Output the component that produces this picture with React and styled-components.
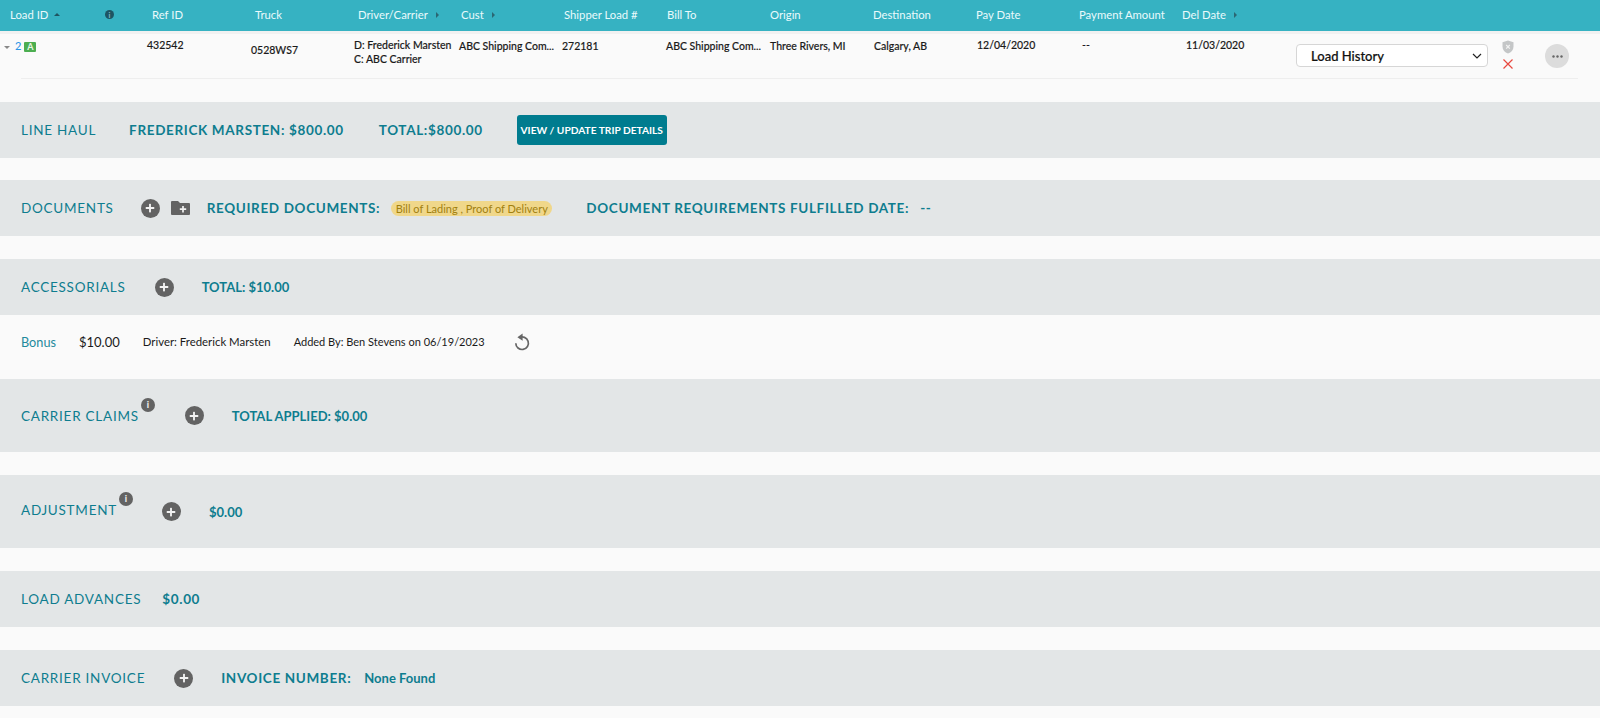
import React from "react";
import styled, { createGlobalStyle } from "styled-components";
import { FaPlus } from "react-icons/fa";

const GlobalStyle = createGlobalStyle`
  html, body {
    margin: 0;
    padding: 0;
    background: #fafafa;
    font-family: Lato, "Liberation Sans", sans-serif;
  }
`;

const Page = styled.div`
  width: 1600px;
  height: 718px;
  overflow: hidden;
  background: #fafafa;
`;

const HeaderBar = styled.div`
  display: grid;
  grid-template-columns: 95px 47px repeat(11, 103px);
  align-items: center;
  height: 31px;
  padding: 0 0 2px 10px;
  box-sizing: border-box;
  background: #36b2c2;
`;

const HeaderCell = styled.div`
  display: flex;
  align-items: center;
  gap: ${({ $gap }) => $gap || 6}px;
  font-size: 11.3px;
  color: #eafafc;
  white-space: nowrap;
`;

const Caret = styled.span`
  width: 0;
  height: 0;
  ${({ $up }) =>
    $up
      ? `border-left: 3px solid transparent;
         border-right: 3px solid transparent;
         border-bottom: 3px solid #1f5561;`
      : `border-top: 3.5px solid transparent;
         border-bottom: 3.5px solid transparent;
         border-left: 3.5px solid #2b6773;`}
`;

const HeaderInfo = styled.span`
  display: flex;
  align-items: center;
  justify-content: center;
  width: 9px;
  height: 9px;
  border-radius: 50%;
  background: #1d5563;
  color: #7fb6c0;
  font-size: 7px;
  font-weight: 900;
`;

const RowWrap = styled.div`
  height: 71px;
  box-sizing: border-box;
  border-top: 3px solid #f1f1f1;
`;

const Row = styled.div`
  display: grid;
  grid-template-columns: 143px 104px 103px 105px 103px 104px 104px 104px 103px 105px 104px 110px 1fr;
  height: 44px;
  padding-left: 4px;
`;

const Divider = styled.div`
  height: 1px;
  margin: 0 22px 0 21px;
  background: #eeeeee;
`;

const Cell = styled.div`
  padding-top: ${({ $top }) => $top ?? 5}px;
  font-size: 10.5px;
  line-height: 14px;
  font-weight: 500;
  color: #1a1a1a;
  white-space: nowrap;
  -webkit-text-stroke: 0.15px #1a1a1a;
`;

const IdCell = styled(Cell)`
  display: flex;
  align-items: flex-start;
  -webkit-text-stroke: 0;
`;

const Toggle = styled.span`
  width: 0;
  height: 0;
  margin: 7px 5px 0 0;
  border-left: 3px solid transparent;
  border-right: 3px solid transparent;
  border-top: 3px solid #888;
`;

const LoadLink = styled.span`
  margin-right: 3px;
  color: #2c96e6;
  font-size: 11px;
`;

const Badge = styled.span`
  display: flex;
  align-items: center;
  justify-content: center;
  width: 12px;
  height: 10px;
  margin-top: 3px;
  border-radius: 1px;
  background: #4cae50;
  color: #e9f6e9;
  font-size: 9px;
  font-weight: 700;
`;

const ActionCell = styled.div`
  display: flex;
  align-items: flex-start;
`;

const SelectBox = styled.div`
  display: flex;
  align-items: center;
  justify-content: space-between;
  flex: none;
  width: 192px;
  height: 23px;
  margin-top: 10px;
  padding: 0 5px 0 14px;
  box-sizing: border-box;
  background: #fff;
  border: 1px solid #d6d6d6;
  border-radius: 4px;
  font-size: 13px;
  font-weight: 500;
  color: #111;
  white-space: nowrap;
  -webkit-text-stroke: 0.2px #111;
`;

const StatusIcons = styled.div`
  display: flex;
  flex-direction: column;
  align-items: center;
  flex: none;
  gap: 5px;
  width: 12px;
  margin: 6px 0 0 14px;
`;

const MoreButton = styled.div`
  display: flex;
  align-items: center;
  justify-content: center;
  flex: none;
  width: 24px;
  height: 24px;
  margin: 10px 0 0 31px;
  border-radius: 50%;
  background: #dcdcdc;
`;

const Bar = styled.section`
  display: flex;
  align-items: center;
  height: ${({ $h }) => $h || 56}px;
  margin-bottom: ${({ $mb }) => $mb ?? 22}px;
  padding-left: 21px;
  box-sizing: border-box;
  background: #e3e6e7;
`;

const Title = styled.div`
  position: relative;
  margin-right: ${({ $mr }) => $mr}px;
  margin-bottom: ${({ $lift }) => $lift || 0}px;
  font-size: 13.5px;
  line-height: 16px;
  letter-spacing: 0.75px;
  color: #0e7d8f;
  white-space: nowrap;
`;

const Value = styled.div`
  margin-right: ${({ $mr }) => $mr || 0}px;
  font-size: 13.5px;
  font-weight: 700;
  letter-spacing: 0.65px;
  color: #0e7d8f;
  white-space: nowrap;
`;

const PlainValue = styled(Value)`
  font-size: 13px;
  letter-spacing: 0;
`;

const TripButton = styled.button`
  width: 150px;
  height: 30px;
  padding: 0;
  border: none;
  border-radius: 3px;
  background: #007c8f;
  color: #fff;
  font-family: inherit;
  font-size: 10.2px;
  font-weight: 700;
`;

const AddButton = styled.span`
  display: flex;
  align-items: center;
  justify-content: center;
  flex: none;
  width: 19px;
  height: 19px;
  margin-right: ${({ $mr }) => $mr}px;
  border-radius: 50%;
  background: #636363;
  color: #f2f2f2;
  font-size: 10px;
`;

const FolderIcon = styled.svg`
  flex: none;
  width: 19px;
  height: 16px;
  margin-right: 17px;
`;

const DocPill = styled.span`
  margin-right: 34px;
  padding: 0 4.5px;
  border-radius: 8px;
  background: #f0d78a;
  color: #a1800f;
  font-size: 11px;
  line-height: 15px;
  white-space: nowrap;
`;

const InfoDot = styled.span`
  position: absolute;
  top: -10px;
  right: -16px;
  display: flex;
  align-items: center;
  justify-content: center;
  width: 14px;
  height: 14px;
  border-radius: 50%;
  background: #636363;
  color: #eee;
  font-size: 9px;
  font-weight: 900;
  letter-spacing: 0;
`;

const Detail = styled.div`
  display: flex;
  align-items: center;
  height: 64px;
  padding: 0 0 11px 21px;
  box-sizing: border-box;
`;

const DetailName = styled.span`
  margin-right: 23px;
  color: #1f8a9c;
  font-size: 12.7px;
`;

const DetailAmount = styled.span`
  margin-right: 23px;
  color: #1a1a1a;
  font-size: 13px;
`;

const DetailNote = styled.span`
  margin-right: ${({ $mr }) => $mr}px;
  color: #1a1a1a;
  font-size: ${({ $size }) => $size}px;
`;

const columns = [
  { label: "Load ID", caret: "up" },
  { info: true },
  { label: "Ref ID" },
  { label: "Truck" },
  { label: "Driver/Carrier", caret: "side" },
  { label: "Cust", caret: "side" },
  { label: "Shipper Load #" },
  { label: "Bill To" },
  { label: "Origin" },
  { label: "Destination" },
  { label: "Pay Date" },
  { label: "Payment Amount" },
  { label: "Del Date", caret: "side" },
];

const Shield = () => (
  <svg width="12" height="14" viewBox="0 0 12 14">
    <path d="M6 0.5 11.5 2.3v4.4c0 3.3-2.3 5.7-5.5 6.8C2.8 12.4 0.5 10 0.5 6.7V2.3z" fill="#c4c6c7" />
    <path d="M4.2 5l3.6 3.6M7.8 5 4.2 8.6" stroke="#f2f2f2" strokeWidth="1.2" />
  </svg>
);

const RedCross = () => (
  <svg width="10" height="10" viewBox="0 0 10 10">
    <path d="M0.5 0.5l9 9M9.5 0.5l-9 9" stroke="#e8483f" strokeWidth="1.2" />
  </svg>
);

const Chevron = () => (
  <svg width="10" height="6" viewBox="0 0 10 6">
    <path d="M1 1l4 4 4-4" fill="none" stroke="#222" strokeWidth="1.2" />
  </svg>
);

const Dots = () => (
  <svg width="11" height="3" viewBox="0 0 11 3">
    <circle cx="1.5" cy="1.5" r="1.2" fill="#666" />
    <circle cx="5.5" cy="1.5" r="1.2" fill="#666" />
    <circle cx="9.5" cy="1.5" r="1.2" fill="#666" />
  </svg>
);

const Undo = () => (
  <svg width="18" height="20" viewBox="0 0 18 20">
    <path d="M6.2 5.6a6.3 6.3 0 1 1-3.4 5.6" fill="none" stroke="#666" strokeWidth="1.7" />
    <path d="M9.6 1.4v7.4L4.4 5.3z" fill="#666" />
  </svg>
);

const Add = ({ mr }) => (
  <AddButton $mr={mr}>
    <FaPlus />
  </AddButton>
);

const App = () => {
  return (
    <Page>
      <GlobalStyle />
      <HeaderBar>
        {columns.map((col, i) =>
          col.info ? (
            <HeaderCell key={i}>
              <HeaderInfo>i</HeaderInfo>
            </HeaderCell>
          ) : (
            <HeaderCell key={i} $gap={col.caret === "side" ? 8 : 6}>
              {col.label}
              {col.caret && <Caret $up={col.caret === "up"} />}
            </HeaderCell>
          )
        )}
      </HeaderBar>

      <RowWrap>
        <Row>
          <IdCell>
            <Toggle />
            <LoadLink>2</LoadLink>
            <Badge>A</Badge>
          </IdCell>
          <Cell $top={4}>432542</Cell>
          <Cell $top={9}>0528WS7</Cell>
          <Cell $top={4}>
            D: Frederick Marsten
            <br />
            C: ABC Carrier
          </Cell>
          <Cell>ABC Shipping Com...</Cell>
          <Cell>272181</Cell>
          <Cell>ABC Shipping Com...</Cell>
          <Cell>Three Rivers, MI</Cell>
          <Cell>Calgary, AB</Cell>
          <Cell $top={4}>12/04/2020</Cell>
          <Cell $top={4}>--</Cell>
          <Cell $top={4}>11/03/2020</Cell>
          <ActionCell>
            <SelectBox>
              Load History
              <Chevron />
            </SelectBox>
            <StatusIcons>
              <Shield />
              <RedCross />
            </StatusIcons>
            <MoreButton>
              <Dots />
            </MoreButton>
          </ActionCell>
        </Row>
        <Divider />
      </RowWrap>

      <Bar>
        <Title $mr={33}>LINE HAUL</Title>
        <Value $mr={35}>FREDERICK MARSTEN: $800.00</Value>
        <Value $mr={34}>TOTAL:$800.00</Value>
        <TripButton>VIEW / UPDATE TRIP DETAILS</TripButton>
      </Bar>

      <Bar $mb={23}>
        <Title $mr={27}>DOCUMENTS</Title>
        <Add mr={11} />
        <FolderIcon viewBox="0 0 19 16">
          <path d="M0 2a1 1 0 0 1 1-1h6l2 2h9a1 1 0 0 1 1 1v10a1 1 0 0 1-1 1H1a1 1 0 0 1-1-1z" fill="#636363" />
          <path d="M12 6v6.5M8.8 9.2h6.4" stroke="#f2f2f2" strokeWidth="1.7" />
        </FolderIcon>
        <Value $mr={11}>REQUIRED DOCUMENTS:</Value>
        <DocPill>Bill of Lading , Proof of Delivery</DocPill>
        <Value $mr={11}>DOCUMENT REQUIREMENTS FULFILLED DATE:</Value>
        <Value>--</Value>
      </Bar>

      <Bar $mb={0}>
        <Title $mr={29}>ACCESSORIALS</Title>
        <Add mr={28} />
        <PlainValue>TOTAL: $10.00</PlainValue>
      </Bar>

      <Detail>
        <DetailName>Bonus</DetailName>
        <DetailAmount>$10.00</DetailAmount>
        <DetailNote $mr={23} $size={11.4}>Driver: Frederick Marsten</DetailNote>
        <DetailNote $mr={28} $size={11}>Added By: Ben Stevens on 06/19/2023</DetailNote>
        <Undo />
      </Detail>

      <Bar $h={73} $mb={23}>
        <Title $mr={46}>
          CARRIER CLAIMS
          <InfoDot>i</InfoDot>
        </Title>
        <Add mr={28} />
        <PlainValue>TOTAL APPLIED: $0.00</PlainValue>
      </Bar>

      <Bar $h={73} $mb={23}>
        <Title $mr={45} $lift={3}>
          ADJUSTMENT
          <InfoDot>i</InfoDot>
        </Title>
        <Add mr={28} />
        <PlainValue>$0.00</PlainValue>
      </Bar>

      <Bar $mb={23}>
        <Title $mr={21}>LOAD ADVANCES</Title>
        <Value>$0.00</Value>
      </Bar>

      <Bar>
        <Title $mr={29}>CARRIER INVOICE</Title>
        <Add mr={28} />
        <Value $mr={13}>INVOICE NUMBER:</Value>
        <PlainValue>None Found</PlainValue>
      </Bar>
    </Page>
  );
};

export default App;
